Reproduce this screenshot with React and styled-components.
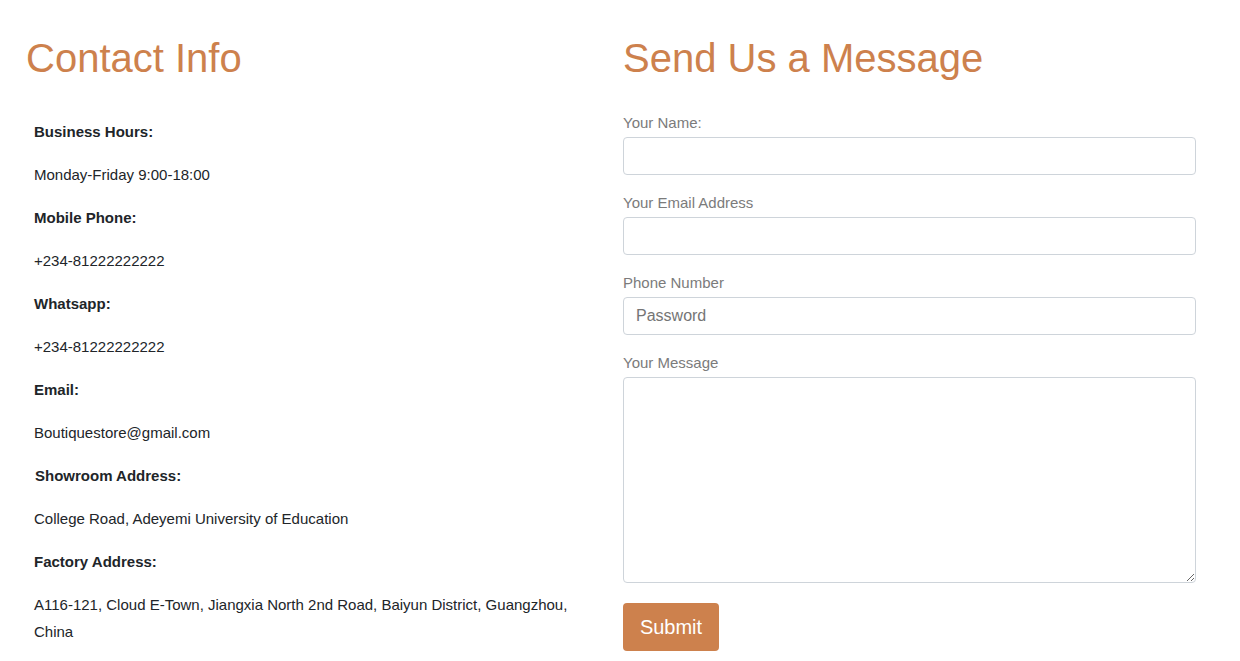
import React from "react";
import styled, { createGlobalStyle } from "styled-components";

const accent = "#cd814d";

const GlobalStyle = createGlobalStyle`
  body {
    margin: 0;
    background: #fff;
    font-family: "Liberation Sans", Arial, sans-serif;
  }
  * {
    box-sizing: border-box;
  }
`;

const Page = styled.div`
  display: grid;
  grid-template-columns: 597px 573px;
  padding: 32px 0 0 26px;
`;

const Column = styled.section`
  display: flex;
  flex-direction: column;
`;

const Title = styled.h2`
  margin: 0 0 34px;
  font-size: 40px;
  font-weight: 400;
  line-height: 52px;
  color: ${accent};
`;

const InfoList = styled.div`
  padding: 0 22px 0 8px;
`;

const InfoLine = styled.p`
  margin: 0 0 16px;
  font-size: 15px;
  line-height: 27px;
  color: #212529;
  font-weight: ${({ bold }) => (bold ? 700 : 400)};
  padding-left: ${({ shift }) => (shift ? "1px" : "0")};
`;

const Form = styled.form`
  display: flex;
  flex-direction: column;
  margin-top: -6px;
`;

const Field = styled.div`
  display: flex;
  flex-direction: column;
  margin-bottom: 17px;
`;

const Label = styled.label`
  margin-bottom: 3px;
  font-size: 15px;
  line-height: 22px;
  color: #7b7b7b;
`;

const Input = styled.input`
  height: 38px;
  width: 100%;
  padding: 0 12px;
  border: 1px solid #ced4da;
  border-radius: 4px;
  font-family: inherit;
  font-size: 16px;
  color: #495057;
  background: #fff;

  ::placeholder {
    color: #555b61;
  }
`;

const TextArea = styled.textarea`
  height: 206px;
  width: 100%;
  padding: 6px 12px;
  border: 1px solid #ced4da;
  border-radius: 4px;
  font-family: inherit;
  font-size: 16px;
  resize: vertical;
`;

const SubmitButton = styled.button`
  align-self: flex-start;
  width: 96px;
  height: 48px;
  margin-top: 3px;
  border: none;
  border-radius: 4px;
  background: ${accent};
  color: #fff;
  font-family: inherit;
  font-size: 20px;
  cursor: pointer;
`;

const info = [
  ["Business Hours:", "Monday-Friday 9:00-18:00"],
  ["Mobile Phone:", "+234-81222222222"],
  ["Whatsapp:", "+234-81222222222"],
  ["Email:", "Boutiquestore@gmail.com"],
  ["Showroom Address:", "College Road, Adeyemi University of Education", true],
  ["Factory Address:", "A116-121, Cloud E-Town, Jiangxia North 2nd Road, Baiyun District, Guangzhou, China"],
];

const App = () => (
  <>
    <GlobalStyle />
    <Page>
      <Column>
        <Title>Contact Info</Title>
        <InfoList>
          {info.map(([label, value, shift]) => (
            <React.Fragment key={label}>
              <InfoLine bold shift={shift}>{label}</InfoLine>
              <InfoLine>{value}</InfoLine>
            </React.Fragment>
          ))}
        </InfoList>
      </Column>
      <Column>
        <Title>Send Us a Message</Title>
        <Form onSubmit={(e) => e.preventDefault()}>
          <Field>
            <Label>Your Name:</Label>
            <Input type="text" />
          </Field>
          <Field>
            <Label>Your Email Address</Label>
            <Input type="email" />
          </Field>
          <Field>
            <Label>Phone Number</Label>
            <Input type="tel" placeholder="Password" />
          </Field>
          <Field>
            <Label>Your Message</Label>
            <TextArea />
          </Field>
          <SubmitButton type="submit">Submit</SubmitButton>
        </Form>
      </Column>
    </Page>
  </>
);

export default App;
